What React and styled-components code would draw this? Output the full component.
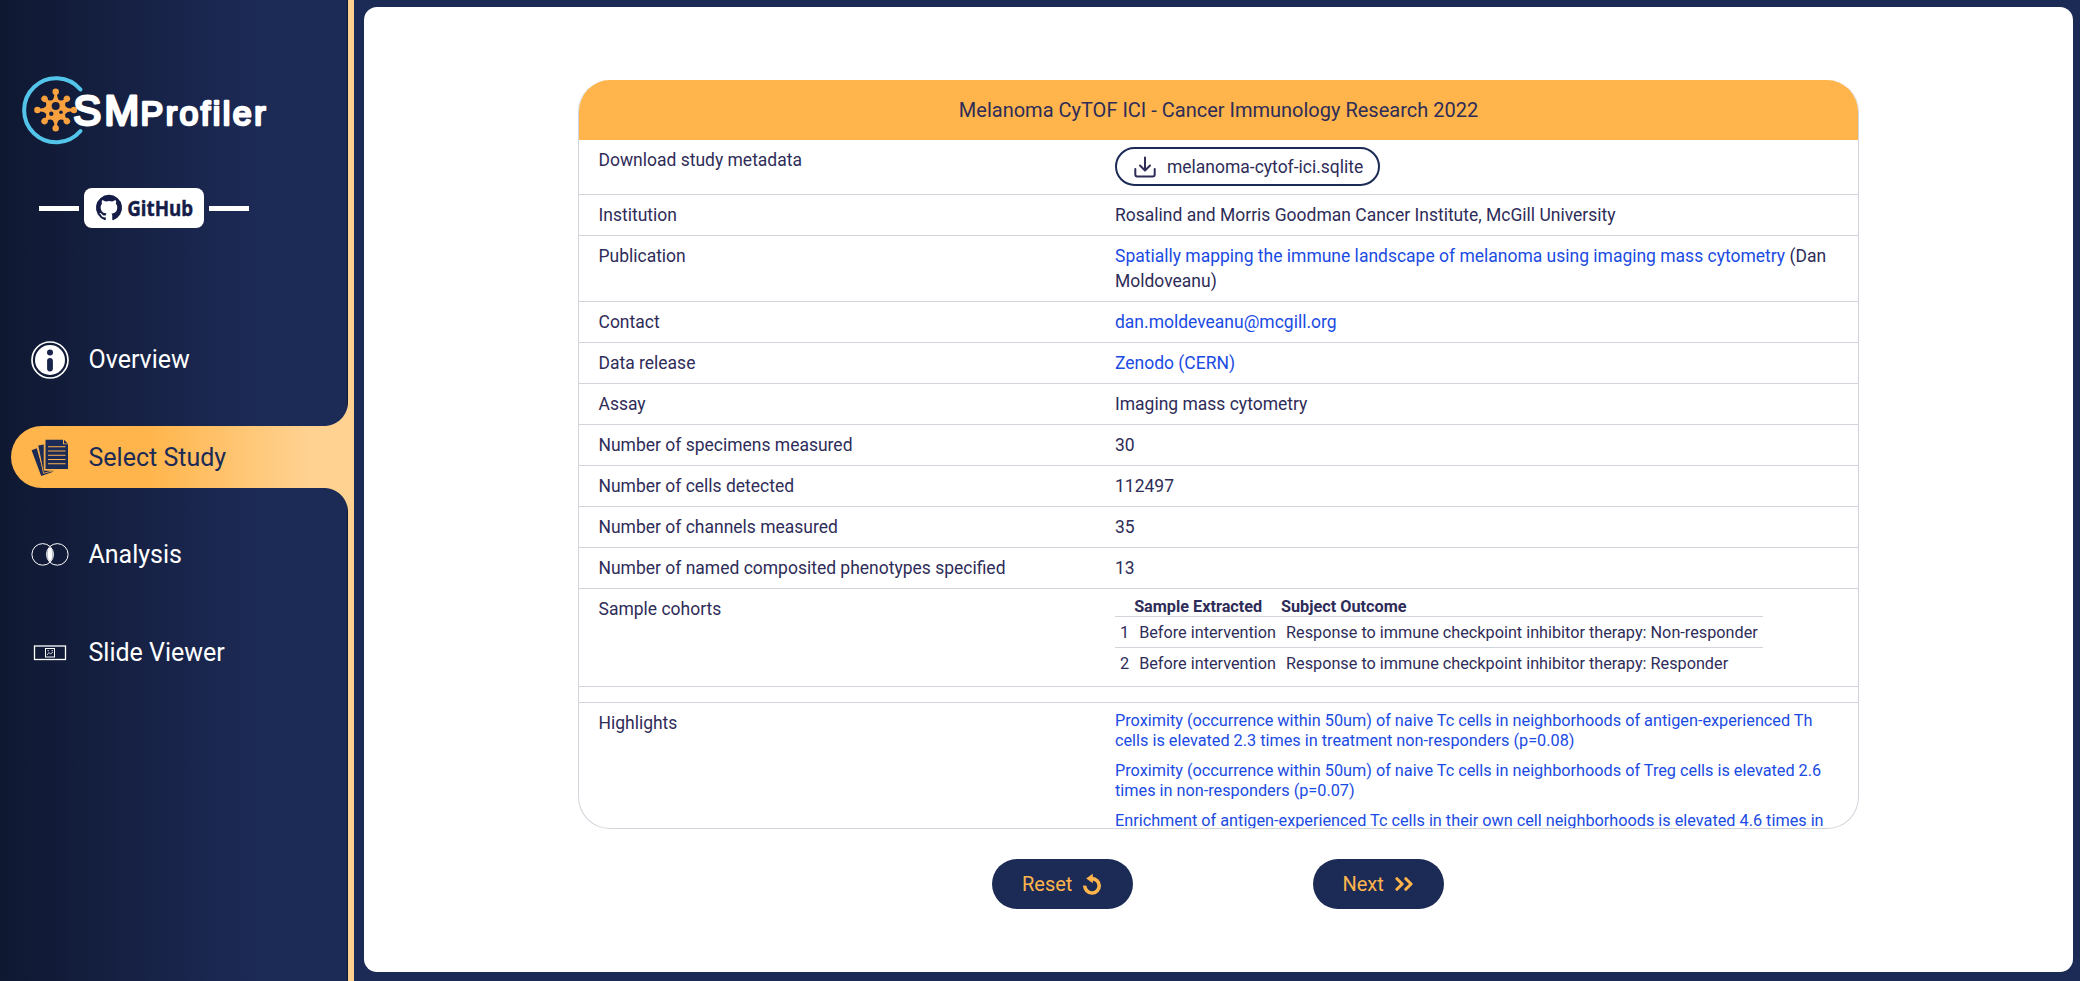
import React from "react";
import styled, { createGlobalStyle, css } from "styled-components";

const navy = "#1c2a56";
const ink = "#2e2c58";
const orange = "#ffb54b";
const peach = "#ffd292";
const line = "#d1d5db";
const blue = "#1a4be3";

const GlobalStyle = createGlobalStyle`
  *, *::before, *::after { box-sizing: border-box; }
  body { margin: 0; font-family: Roboto, "Liberation Sans", sans-serif; color: ${ink}; background: ${navy}; }
`;

const Page = styled.div`
  display: flex;
  height: 981px;
  overflow: hidden;
  background: ${navy};
`;

const Sidebar = styled.aside`
  display: flex;
  flex-direction: column;
  flex: none;
  width: 354px;
  border-right: 6px solid ${peach};
  background: linear-gradient(90deg, #0f1831 0%, #18244a 50%, ${navy} 75%);
  box-shadow: inset -1px 0 0 #0f1831;
`;

const Logo = styled.svg`
  display: block;
  flex: none;
  width: 280px;
  height: 80px;
  margin-top: 70px;
  margin-left: 10px;
`;

const GithubRow = styled.div`
  display: flex;
  align-items: center;
  gap: 5px;
  height: 40px;
  margin: 38px 0 0 39px;
`;

const Dash = styled.span`
  width: 40px;
  height: 5px;
  background: #fff;
`;

const GithubLink = styled.a`
  display: flex;
  align-items: center;
  width: 120px;
  height: 40px;
  border-radius: 8px;
  background: #fff;
`;

const Nav = styled.nav`
  display: flex;
  flex-direction: column;
  gap: 35.5px;
  margin: 100px -6px 0 11px;
`;

const corner = css`
  content: "";
  position: absolute;
  right: 6px;
  width: 24px;
  height: 24px;
`;

const NavItem = styled.a`
  position: relative;
  display: flex;
  align-items: center;
  height: 62px;
  padding: 2px 0 0 20px;
  border-radius: 31px 0 0 31px;
  font-size: 25px;
  line-height: 30px;
  color: ${(p) => (p.$active ? navy : "#fff")};
  ${(p) =>
    p.$active &&
    css`
      background: linear-gradient(90deg, ${orange} 40%, ${peach} 87%);
      &::before {
        ${corner}
        bottom: 100%;
        background: radial-gradient(circle at 0 0, transparent 23.5px, ${peach} 24.5px);
      }
      &::after {
        ${corner}
        top: 100%;
        background: radial-gradient(circle at 0 100%, transparent 23.5px, ${peach} 24.5px);
      }
    `}
  svg { flex: none; width: 38px; height: 38px; margin-right: 19.5px; }
`;

const Main = styled.main`
  display: flex;
  flex: 1;
  padding: 7px 7px 9px 10px;
`;

const Panel = styled.section`
  display: flex;
  flex-direction: column;
  align-items: center;
  flex: 1;
  padding-top: 73px;
  border-radius: 13px;
  background: #fff;
`;

const Card = styled.article`
  display: flex;
  flex-direction: column;
  width: 1281px;
  height: 749px;
  border: 1px solid ${line};
  border-top: 0;
  border-radius: 32px;
  overflow: hidden;
`;

const CardTitle = styled.h1`
  flex: none;
  margin: 0 -1px;
  height: 60px;
  line-height: 60px;
  text-align: center;
  font-size: 20px;
  font-weight: 400;
  background: ${orange};
`;

const Row = styled.div`
  display: grid;
  flex: none;
  grid-template-columns: 516.5px 1fr;
  height: ${(p) => p.$h || 41}px;
  padding: ${(p) => (p.$h === 16 ? 0 : 8)}px 20px 0 19.5px;
  border-bottom: 1px solid ${line};
  font-size: 17.49px;
  line-height: 25px;
`;

const Label = styled.div``;
const Value = styled.div``;

const Link = styled.a`
  color: ${blue};
`;

const Download = styled.a`
  display: flex;
  align-items: center;
  width: 265px;
  height: 39px;
  margin-top: -1px;
  padding: 1px 0 0 17px;
  gap: 11px;
  border: 2px solid ${navy};
  border-radius: 20px;
`;

const Cohorts = styled.table`
  border-collapse: collapse;
  font-size: 16.24px;
  line-height: 20px;
  margin-top: -1px;
  th { padding: 1px 15px 0 0; text-align: left; font-weight: 700; height: 20px; line-height: 19px; }
  td { padding: 6px 5px 4px; height: 31px; }
  th:nth-child(2) { padding-left: 0; }
  tr + tr td, tbody tr:first-child td { border-top: 1px solid ${line}; }
`;

const Highlight = styled.p`
  margin: 0 0 10px;
  font-size: 16.25px;
  line-height: 20px;
  color: ${blue};
`;

const Actions = styled.div`
  display: flex;
  gap: 180px;
  margin-top: 30px;
  margin-right: 2px;
`;

const Pill = styled.button`
  display: flex;
  align-items: center;
  gap: 11px;
  width: ${(p) => p.$w}px;
  height: 50px;
  padding: 0 0 0 ${(p) => p.$pad}px;
  border: 0;
  border-radius: 25px;
  background: ${navy};
  color: ${orange};
  font: 20px Roboto, sans-serif;
`;

const arms = [0, 45, 90, 135, 180, 225, 270, 315];

function BrandLogo() {
  return (
    <Logo viewBox="10 70 280 80">
      <path d="M80.5 89.5A32 32 0 1 0 80.5 131" fill="none" stroke="#54c5ea" strokeWidth="4" strokeLinecap="round" />
      <g fill="#f9a13f">
        <circle cx="55.7" cy="110" r="10.5" />
        {arms.map((a) => {
          const r = a % 90 ? 15.8 : 18.3;
          return (
            <g key={a} transform={`translate(55.7 110) rotate(${a})`}>
              <path d={`M-4-9Q-1-12-1.3-${r - 1}H1.3Q1-12 4-9Z`} />
              <circle cy={-r} r="3.2" />
            </g>
          );
        })}
      </g>
      <g fill="#18203b">
        <circle cx="55.7" cy="106" r="4" />
        <circle cx="51.3" cy="113.8" r="2.2" />
        <circle cx="61" cy="112.3" r="1.8" />
      </g>
      <g fill="#fff" stroke="#fff" strokeLinejoin="round" fontFamily='"Liberation Sans", Arial, sans-serif'>
        <text x="73.3" y="124.6" fontSize="42" strokeWidth="2.8" textLength="66" lengthAdjust="spacing">SM</text>
        <text x="140.5" y="124.8" fontSize="34" strokeWidth="2.5" textLength="125" lengthAdjust="spacing">Profiler</text>
      </g>
    </Logo>
  );
}

function GithubMark() {
  return (
    <svg width="120" height="40" viewBox="0 0 120 40">
      <g transform="translate(12 6.5) scale(1.083)" fill="#151c48">
        <path d="M12 .3a12 12 0 0 0-3.8 23.4c.6.1.8-.3.8-.6v-2c-3.3.7-4-1.6-4-1.6-.6-1.4-1.4-1.8-1.4-1.8-1-.7.1-.7.1-.7 1.2 0 1.9 1.2 1.9 1.2 1 1.8 2.8 1.3 3.5 1 0-.8.4-1.3.7-1.6-2.7-.3-5.5-1.3-5.5-6 0-1.2.5-2.3 1.3-3.1-.2-.4-.6-1.6 0-3.2 0 0 1-.3 3.4 1.2a11.5 11.5 0 0 1 6 0c2.3-1.5 3.3-1.2 3.3-1.2.6 1.6.2 2.8 0 3.2.9.8 1.3 1.9 1.3 3.2 0 4.6-2.8 5.6-5.5 5.9.5.4.9 1 .9 2.2v3.3c0 .3.1.7.8.6A12 12 0 0 0 12 .3" />
      </g>
      <text x="43.2" y="28" fontFamily='"Noto Sans", sans-serif' fontWeight="700" fontSize="21.5" fill="#151c48" stroke="#151c48" strokeWidth=".4" textLength="66" lengthAdjust="spacingAndGlyphs">GitHub</text>
    </svg>
  );
}

const InfoIcon = () => (
  <svg viewBox="0 0 38 38">
    <circle cx="19" cy="19" r="18" fill="none" stroke="#fff" strokeWidth="1.7" />
    <circle cx="19" cy="19" r="15" fill="#fff" />
    <circle cx="19" cy="11.5" r="3" fill="#18244a" />
    <rect x="16.1" y="17" width="5.8" height="13.5" rx="2.9" fill="#18244a" />
  </svg>
);

const StudyIcon = () => (
  <svg viewBox="0 0 38 38" fill={navy}>
    <path d="M.6 11.2 5.8 9.3 12 31.5 23 32.5 10.2 37Z" />
    <path d="M6.8 6.2 13.2 5V31.3H23.5L12.5 34.3Z" stroke={orange} strokeWidth=".8" />
    <path d="M14.5 .8H32V5.3H37V30H14.5Z" />
    <path d="M33 .8 37 4.4H33Z" />
    <path d="M17 7.8H34.5M17 12H34.5M17 16.3H34.5M17 20.5H34.5M17 24.8H34.5" stroke={orange} strokeWidth="1.1" />
  </svg>
);

const VennIcon = () => (
  <svg viewBox="0 0 38 38" fill="none" stroke="#fff">
    <circle cx="11.7" cy="18.4" r="10.8" />
    <circle cx="26.3" cy="18.4" r="10.8" />
    <ellipse cx="19" cy="18.4" rx="2.2" ry="6.2" fill="#fff" />
  </svg>
);

const SlideIcon = () => (
  <svg viewBox="0 0 38 38" fill="none" stroke="#fff">
    <rect x="3.5" y="12" width="31" height="13.5" strokeWidth="1.3" />
    <rect x="14.5" y="14.5" width="9" height="8.5" />
    <path d="M16 21 18 18.5 19.5 20 22 18M16.5 16.7H18M20.5 16.7H22" strokeWidth=".8" />
  </svg>
);

const DownloadIcon = () => (
  <svg width="22" height="22" viewBox="0 0 22 22" fill="none" stroke={ink} strokeWidth="2" strokeLinecap="round" strokeLinejoin="round">
    <path d="M11 1.5V14M6 9.5 11 14.5 16 9.5M1.3 13V18.5Q1.3 20.5 3.3 20.5H18.7Q20.7 20.5 20.7 18.5V13" />
  </svg>
);

const ResetIcon = () => (
  <svg width="18" height="22" viewBox="0 0 18 22">
    <path d="M1.8 12.6A7.2 7.2 0 1 0 9 5.6" fill="none" stroke={orange} strokeWidth="3.6" />
    <path d="M3.2 5.6 9.8.8V10.2Z" fill={orange} />
  </svg>
);

const NextIcon = () => (
  <svg width="18" height="14" viewBox="0 0 18 14" fill="none" stroke={orange} strokeWidth="3" strokeLinecap="round" strokeLinejoin="round">
    <path d="M1.9 1.7 7.2 7 1.9 12.3M10.8 1.7 16.1 7 10.8 12.3" />
  </svg>
);

const navItems = [
  ["Overview", InfoIcon],
  ["Select Study", StudyIcon, true],
  ["Analysis", VennIcon],
  ["Slide Viewer", SlideIcon],
];

const counts = [
  ["Number of specimens measured", "30"],
  ["Number of cells detected", "112497"],
  ["Number of channels measured", "35"],
  ["Number of named composited phenotypes specified", "13"],
];

const cohorts = [
  ["1", "Before intervention", "Response to immune checkpoint inhibitor therapy: Non-responder"],
  ["2", "Before intervention", "Response to immune checkpoint inhibitor therapy: Responder"],
];

const highlights = [
  "Proximity (occurrence within 50um) of naive Tc cells in neighborhoods of antigen-experienced Th cells is elevated 2.3 times in treatment non-responders (p=0.08)",
  "Proximity (occurrence within 50um) of naive Tc cells in neighborhoods of Treg cells is elevated 2.6 times in non-responders (p=0.07)",
  "Enrichment of antigen-experienced Tc cells in their own cell neighborhoods is elevated 4.6 times in",
];

function Entry({ label, h, children }) {
  return (
    <Row $h={h}>
      <Label>{label}</Label>
      <Value>{children}</Value>
    </Row>
  );
}

export default function App() {
  return (
    <Page>
      <GlobalStyle />
      <Sidebar>
        <BrandLogo />
        <GithubRow>
          <Dash />
          <GithubLink><GithubMark /></GithubLink>
          <Dash />
        </GithubRow>
        <Nav>
          {navItems.map(([name, Icon, active]) => (
            <NavItem key={name} $active={active}>
              <Icon />
              {name}
            </NavItem>
          ))}
        </Nav>
      </Sidebar>
      <Main>
        <Panel>
          <Card>
            <CardTitle>Melanoma CyTOF ICI - Cancer Immunology Research 2022</CardTitle>
            <Entry label="Download study metadata" h={55}>
              <Download><DownloadIcon />melanoma-cytof-ici.sqlite</Download>
            </Entry>
            <Entry label="Institution">Rosalind and Morris Goodman Cancer Institute, McGill University</Entry>
            <Entry label="Publication" h={66}>
              <Link>Spatially mapping the immune landscape of melanoma using imaging mass cytometry</Link> (Dan Moldoveanu)
            </Entry>
            <Entry label="Contact"><Link>dan.moldeveanu@mcgill.org</Link></Entry>
            <Entry label="Data release"><Link>Zenodo (CERN)</Link></Entry>
            <Entry label="Assay">Imaging mass cytometry</Entry>
            {counts.map(([label, n]) => (
              <Entry key={label} label={label}>{n}</Entry>
            ))}
            <Entry label="Sample cohorts" h={98}>
              <Cohorts>
                <thead>
                  <tr><th /><th>Sample Extracted</th><th>Subject Outcome</th></tr>
                </thead>
                <tbody>
                  {cohorts.map((c) => (
                    <tr key={c[0]}>{c.map((t) => <td key={t}>{t}</td>)}</tr>
                  ))}
                </tbody>
              </Cohorts>
            </Entry>
            <Row $h={16} />
            <Entry label="Highlights" h={200}>
              {highlights.map((t) => <Highlight key={t}>{t}</Highlight>)}
            </Entry>
          </Card>
          <Actions>
            <Pill $w={141} $pad={30.5}>Reset<ResetIcon /></Pill>
            <Pill $w={131} $pad={30}>Next<NextIcon /></Pill>
          </Actions>
        </Panel>
      </Main>
    </Page>
  );
}
